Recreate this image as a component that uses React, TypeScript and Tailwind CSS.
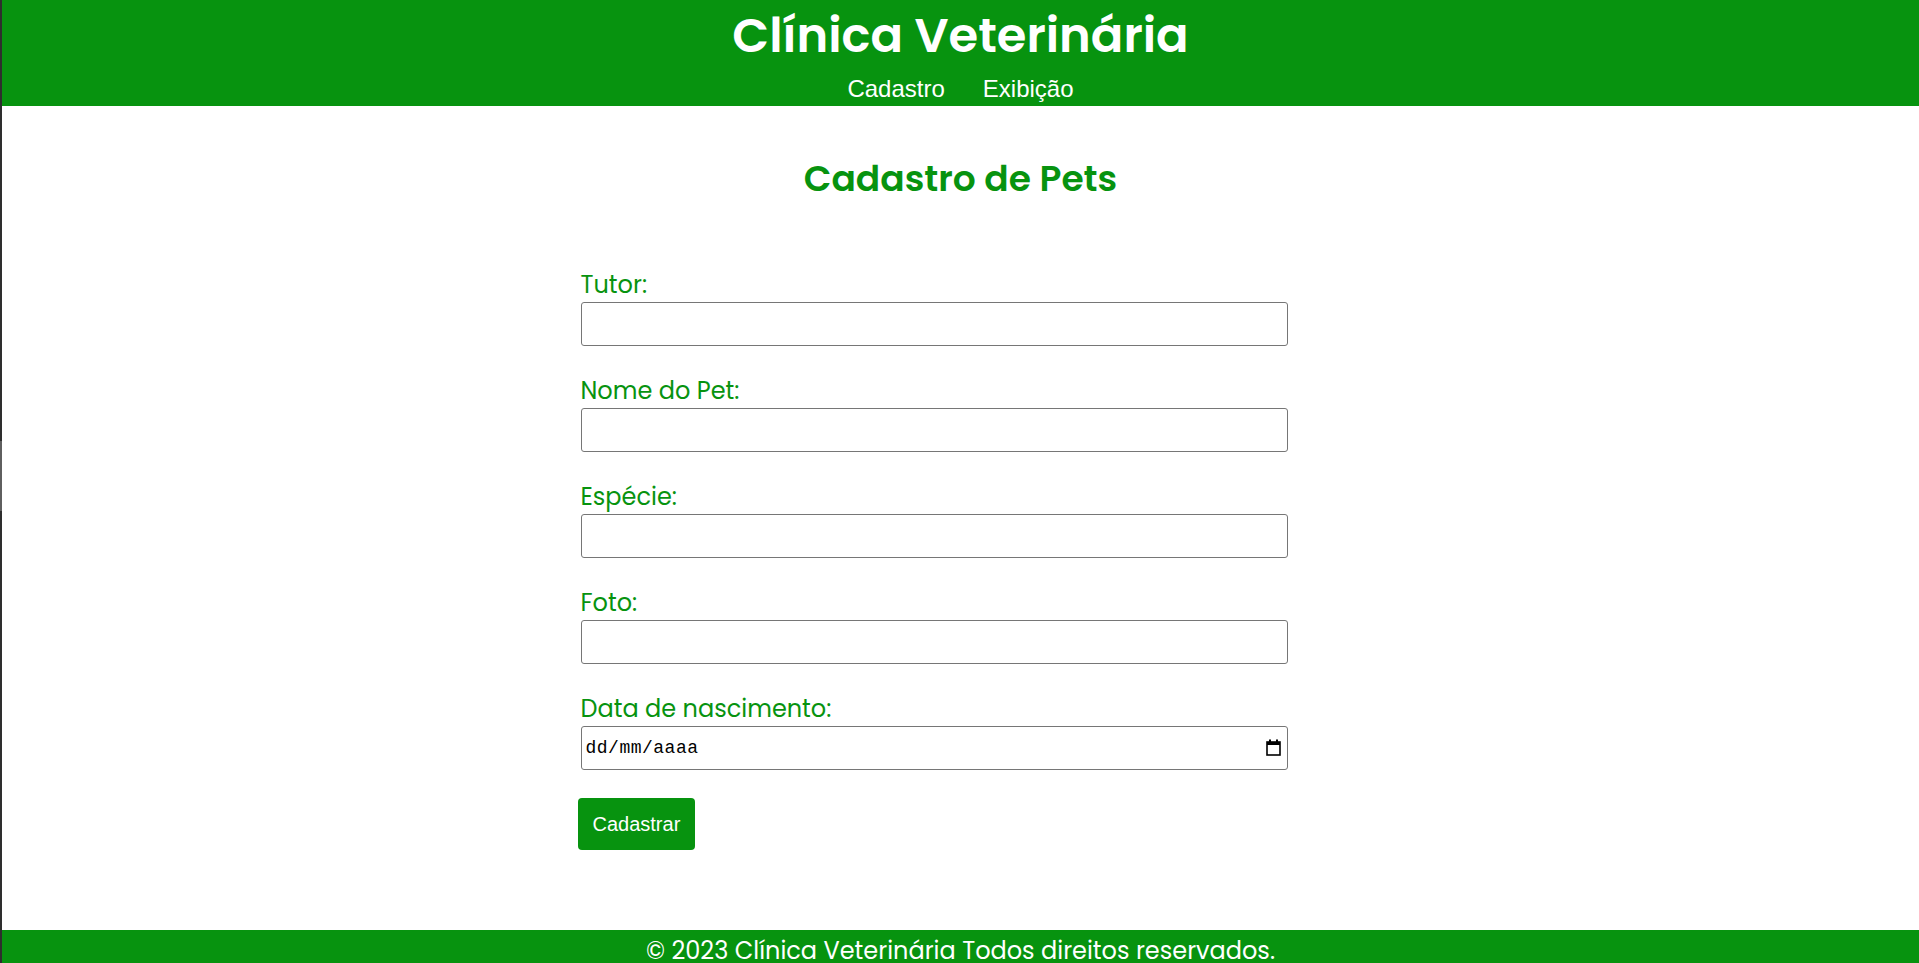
import React from "react";

const green = "bg-[#07930f]";

const fields = [
  { id: "tutor", label: "Tutor:" },
  { id: "nome", label: "Nome do Pet:" },
  { id: "especie", label: "Espécie:" },
  { id: "foto", label: "Foto:" },
];

const CalendarIcon = () => (
  <svg width="15" height="17" viewBox="0 0 15 17" fill="none">
    <rect x="3" y="0.5" width="2" height="3" fill="#000" />
    <rect x="10" y="0.5" width="2" height="3" fill="#000" />
    <rect x="1" y="3" width="13" height="13" stroke="#000" strokeWidth="1.6" fill="none" />
    <rect x="1" y="3" width="13" height="3" fill="#000" />
  </svg>
);

export default function App() {
  return (
    <div className="flex bg-white font-['Poppins','DejaVu_Sans',sans-serif]">
      <div className="w-[2px] shrink-0 bg-[#2e2e2e]">
        <div className="mt-[441px] h-[70px] bg-[#5f5f5f]" />
      </div>

      <div className="flex-1 flex flex-col">
        <header className={`${green} h-[106px] flex flex-col items-center text-white`}>
          <h1 className="pt-[8px] text-[48px] leading-[56px] font-semibold">Clínica Veterinária</h1>
          <nav className="mt-[11px] flex gap-[38px] font-['Liberation_Sans',Arial,sans-serif] text-[24px] leading-[28px]">
            <a href="#">Cadastro</a>
            <a href="#">Exibição</a>
          </nav>
        </header>

        <main className="flex flex-col items-center pb-[80px]">
          <h2 className="mt-[51px] text-[36px] leading-[44px] font-semibold text-[#07930f]">
            Cadastro de Pets
          </h2>

          <form className="mt-[70px] w-[760px] flex flex-col" onSubmit={(e) => e.preventDefault()}>
            {fields.map((f) => (
              <div key={f.id} className="flex flex-col mb-[31px]">
                <label htmlFor={f.id} className="text-[24px] leading-[28px] text-[#07930f]">
                  {f.label}
                </label>
                <input
                  id={f.id}
                  type="text"
                  className="mt-[3px] w-[707px] h-[44px] border border-[#767676] rounded-[3px] bg-white px-[4px] outline-none"
                />
              </div>
            ))}

            <div className="flex flex-col">
              <label htmlFor="nascimento" className="text-[24px] leading-[28px] text-[#07930f]">
                Data de nascimento:
              </label>
              <div className="relative mt-[3px] w-[707px]">
                <input
                  id="nascimento"
                  type="text"
                  placeholder="dd/mm/aaaa"
                  className="w-full h-[44px] border border-[#767676] rounded-[3px] bg-white pl-[4px] pr-[30px] outline-none font-['Liberation_Mono',monospace] text-[18px] tracking-[0.5px] placeholder:text-black"
                />
                <span className="absolute right-[7px] top-[13px] flex">
                  <CalendarIcon />
                </span>
              </div>
            </div>

            <div className="mt-[28px]">
              <button
                type="submit"
                className={`${green} -ml-[3px] h-[52px] px-[15px] rounded-[4px] text-white font-['Liberation_Sans',Arial,sans-serif] text-[20px]`}
              >
                Cadastrar
              </button>
            </div>
          </form>
        </main>

        <footer className={`${green} pt-[7px] pb-[8px] text-center text-white text-[24px] leading-[28px]`}>
          © 2023 Clínica Veterinária Todos direitos reservados.
        </footer>
      </div>
    </div>
  );
}
